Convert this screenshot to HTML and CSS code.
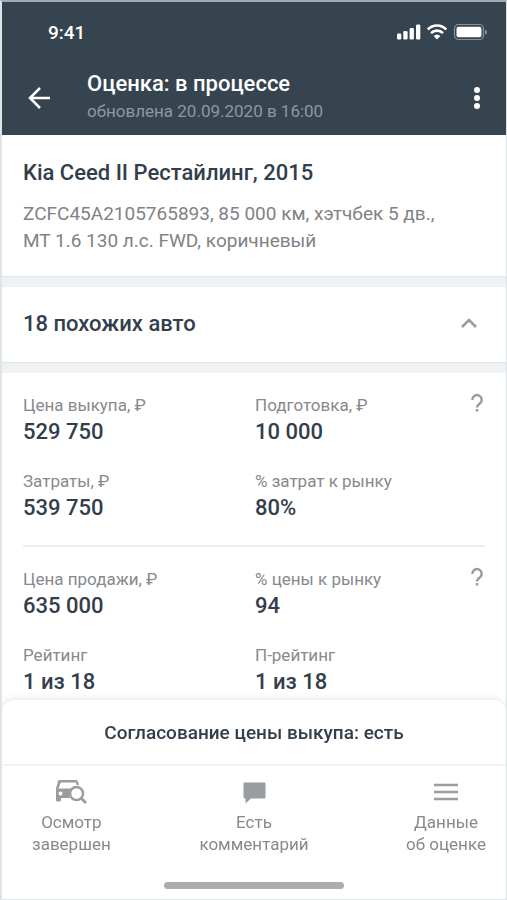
FILE: index.html
```html
<!DOCTYPE html>
<html lang="ru">
<head>
  <meta charset="UTF-8">
  <meta name="viewport" content="width=device-width, initial-scale=1">
  <title>Оценка: в процессе</title>
  <link rel="stylesheet" href="styles.css">
</head>
<body>
  <header class="header">
    <div class="status-bar">
      <span class="time">9:41</span>
      <svg class="status-icons" width="92" height="18" viewBox="0 0 92 18" fill="#fff">
        <rect x="1" y="10.500" width="4.300" height="6" rx="1.300" />
        <rect x="7.300" y="8" width="4.300" height="8.500" rx="1.300" />
        <rect x="13.600" y="5" width="4.300" height="11.500" rx="1.300" />
        <rect x="20" y="1.500" width="4.300" height="15" rx="1.300" />
        <g fill="none" stroke="#fff" stroke-width="2.600">
          <path d="M31.800 6.500a12.600 12.600 0 0 1 18.400 0" />
          <path d="M35 10.200a8.300 8.300 0 0 1 12 0" />
        </g>
        <path d="M37.600 13a5 5 0 0 1 6.800 0L41 16.500z" />
        <rect x="58.500" y="1.500" width="29" height="15" rx="4" fill="none" stroke="#fff" stroke-opacity=".4" stroke-width="1.200" />
        <rect x="60.500" y="3.700" width="25" height="10.600" rx="2" />
        <path d="M89 6.500q2 .8 2 2.700t-2 2.700z" fill-opacity=".4" />
      </svg>
    </div>
    <div class="app-bar">
      <button class="icon-button" aria-label="Назад">
        <svg width="24" height="24" viewBox="0 0 24 24" fill="none" stroke="#fff" stroke-width="2.500">
          <path d="M23 11H3M13 1L3 11l10 10" />
        </svg>
      </button>
      <div class="app-bar-text">
        <h1 class="title">Оценка: в процессе</h1>
        <p class="subtitle">обновлена 20.09.2020 в 16:00</p>
      </div>
      <button class="icon-button" aria-label="Меню">
        <svg width="8" height="24" viewBox="0 0 8 24" fill="#fff">
          <circle cx="4" cy="3" r="3" />
          <circle cx="4" cy="11" r="3" />
          <circle cx="4" cy="19" r="3" />
        </svg>
      </button>
    </div>
  </header>

  <main class="content">
    <section class="card car">
      <h2 class="card-title">Kia Ceed II Рестайлинг, 2015</h2>
      <p class="car-info">ZCFC45A2105765893, 85 000 км, хэтчбек 5 дв., МТ 1.6 130 л.с. FWD, коричневый</p>
    </section>

    <button class="card similar" aria-expanded="true">
      <span class="card-title">18 похожих авто</span>
      <svg width="16" height="12" viewBox="0 0 16 12" fill="none" stroke="#999b9d" stroke-width="2.600">
        <path d="M1 9l7-7 7 7" />
      </svg>
    </button>

    <section class="card prices">
      <div class="group">
        <dl class="values">
          <div class="cell">
            <dt>Цена выкупа, ₽</dt>
            <dd>529 750</dd>
          </div>
          <div class="cell">
            <dt>Подготовка, ₽</dt>
            <dd>10 000</dd>
          </div>
          <div class="cell">
            <dt>Затраты, ₽</dt>
            <dd>539 750</dd>
          </div>
          <div class="cell">
            <dt>% затрат к рынку</dt>
            <dd>80%</dd>
          </div>
        </dl>
        <button class="help" aria-label="Справка">
          <svg width="16" height="20" viewBox="0 0 16 20" fill="none" stroke="#999b9d" stroke-width="2.400">
            <path d="M3.300 7a4.700 4.700 0 1 1 7.900 3.200C9.300 12 8 12.400 8 14.600M8 16v2.500" />
          </svg>
        </button>
      </div>
      <div class="group">
        <dl class="values">
          <div class="cell">
            <dt>Цена продажи, ₽</dt>
            <dd>635 000</dd>
          </div>
          <div class="cell">
            <dt>% цены к рынку</dt>
            <dd>94</dd>
          </div>
          <div class="cell">
            <dt>Рейтинг</dt>
            <dd>1 из 18</dd>
          </div>
          <div class="cell">
            <dt>П-рейтинг</dt>
            <dd>1 из 18</dd>
          </div>
        </dl>
        <button class="help" aria-label="Справка">
          <svg width="16" height="20" viewBox="0 0 16 20" fill="none" stroke="#999b9d" stroke-width="2.400">
            <path d="M3.300 7a4.700 4.700 0 1 1 7.900 3.200C9.300 12 8 12.400 8 14.600M8 16v2.500" />
          </svg>
        </button>
      </div>
    </section>
  </main>

  <footer class="sheet">
    <p class="approval">Согласование цены выкупа: есть</p>
    <nav class="tabs">
      <a href="#inspection" class="tab">
        <svg width="32" height="26" viewBox="0 0 32 26" fill="#9a9da0">
          <path d="M4 1h17q1.500 0 2 1.500L24 6h-2.400l-.6-2.500H5.800L3.500 9.500h13a8 8 0 0 0-1.500 9.500H6v2q0 1.500-1.500 1.500h-2Q1 22.500 1 21V9.500L3 2q.3-1 1-1zM5.500 12.500a2 2 0 1 0 0 4 2 2 0 0 0 0-4z" fill-rule="evenodd" />
          <circle cx="21.500" cy="14.500" r="6.500" fill="#fff" stroke="#9a9da0" stroke-width="2.500" />
          <path d="M26 19l5 5" fill="none" stroke="#9a9da0" stroke-width="2.800" />
        </svg>
        <span>Осмотр<br>завершен</span>
      </a>
      <a href="#comment" class="tab">
        <svg width="24" height="26" viewBox="0 0 24 26" fill="#9a9da0">
          <path d="M2.500 3.500h20q1 0 1 1v14q0 1-1 1H9l-5.500 5v-5h-1q-1 0-1-1v-14q0-1 1-1z" />
        </svg>
        <span>Есть<br>комментарий</span>
      </a>
      <a href="#details" class="tab">
        <svg width="26" height="26" viewBox="0 0 26 26" stroke="#9a9da0" stroke-width="2.500">
          <path d="M1 6h24M1 13h24M1 20h24" />
        </svg>
        <span>Данные<br>об оценке</span>
      </a>
    </nav>
    <div class="home-indicator"></div>
  </footer>
</body>
</html>
```
FILE: styles.css
```css
* {
  box-sizing: border-box;
}

body {
  margin: 0;
  height: 100vh;
  display: flex;
  flex-direction: column;
  border: 1px solid #dfe4e7;
  border-width: 2px 1px 1px 2px;
  border-top-color: #9dadb9;
  background: #fff;
  color: #333e4b;
  font-family: Roboto, "Liberation Sans", sans-serif;
}

h1,
h2,
p,
dl,
dd {
  margin: 0;
}

button {
  padding: 0;
  border: 0;
  background: none;
  color: inherit;
  font: inherit;
  cursor: pointer;
}

svg {
  display: block;
}

.header {
  flex: none;
  background: #364450;
  color: #fff;
}

.status-bar {
  display: flex;
  align-items: center;
  justify-content: space-between;
  height: 60px;
  padding: 0 18px 0 46px;
}

.time {
  font-size: 19px;
  font-weight: 500;
}

.app-bar {
  display: flex;
  align-items: center;
  height: 73px;
  padding: 0 25px;
}

.app-bar-text {
  flex: 1;
  padding: 0 0 4px 36px;
}

.title {
  font-size: 22px;
  font-weight: 500;
  line-height: 28px;
}

.subtitle {
  color: #8c98a2;
  font-size: 17px;
  line-height: 26px;
}

.content {
  flex: 1;
  min-height: 0;
  overflow-y: auto;
  scrollbar-width: none;
  background: #eff2f4;
}

.card {
  display: block;
  width: 100%;
  margin-bottom: 10px;
  padding: 0 21px;
  border-bottom: 1px solid #dfe4e7;
  background: #fff;
}

.card-title {
  font-size: 22px;
  font-weight: 500;
  line-height: 28px;
}

.car {
  padding-top: 24px;
  padding-bottom: 22px;
}

.car-info {
  margin-top: 13px;
  padding-right: 24px;
  color: #808386;
  font-size: 19px;
  line-height: 27px;
}

.similar {
  display: flex;
  align-items: center;
  justify-content: space-between;
  height: 76px;
  padding-right: 29px;
  padding-bottom: 2px;
  text-align: left;
}

.prices {
  margin-bottom: 0;
  border-bottom: 0;
}

.group {
  position: relative;
  padding: 20px 0 22px;
}

.group + .group {
  padding-bottom: 8px;
  border-top: 2px solid #e9edee;
}

.values {
  display: grid;
  grid-template-columns: 1fr 1fr;
  gap: 22px 2px;
}

.cell dt {
  color: #87898c;
  font-size: 17px;
  line-height: 24px;
}

.cell dd {
  font-size: 22px;
  font-weight: 500;
  line-height: 30px;
}

.help {
  position: absolute;
  top: 20px;
  right: 0;
}

.sheet {
  position: relative;
  flex: none;
  border-radius: 12px 12px 0 0;
  background: #fff;
  box-shadow: 0 -1px 6px rgba(51, 62, 75, 0.14);
}

.approval {
  padding: 20px 16px 18px;
  border-bottom: 2px solid #f2f4f5;
  font-size: 19px;
  font-weight: 500;
  line-height: 26px;
  text-align: center;
}

.tabs {
  display: grid;
  grid-template-columns: 1fr auto 1fr;
  padding: 13px 20px 0;
}

.tab {
  display: flex;
  flex-direction: column;
  align-items: center;
  gap: 6px;
  color: #87898c;
  font-size: 17px;
  line-height: 22px;
  text-align: center;
  text-decoration: none;
}

.tab:first-child {
  justify-self: start;
  padding-left: 10px;
}

.tab:last-child {
  justify-self: end;
}

.home-indicator {
  width: 180px;
  height: 7px;
  margin: 27px auto 10px;
  border-radius: 4px;
  background: #adadad;
}
```
